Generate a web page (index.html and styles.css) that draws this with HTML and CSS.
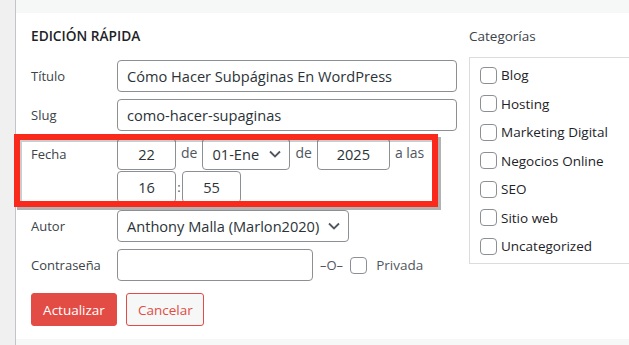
FILE: index.html
```html
<!DOCTYPE html>
<html lang="es">
<head>
<meta charset="utf-8">
<title>Edición rápida</title>
<link rel="stylesheet" href="styles.css">
</head>
<body>
<div class="screen">
  <div class="strip"></div>
  <div class="main">
    <div class="band-top"></div>
    <div class="content">
      <div class="left">
        <h2 class="heading">EDICIÓN RÁPIDA</h2>
        <div class="form">
          <label class="label">Título</label>
          <div class="field"><input class="input wide" type="text" value="Cómo Hacer Subpáginas En WordPress"></div>

          <label class="label">Slug</label>
          <div class="field"><input class="input wide" type="text" value="como-hacer-supaginas"></div>

          <label class="label">Fecha</label>
          <div class="field date">
            <div class="date-line">
              <input class="input num day" type="text" value="22">
              <span class="sep">de</span>
              <div class="select month"><span>01-Ene</span>
                <svg class="chev" width="12" height="8" viewBox="0 0 12 8"><path d="M1 1.5 L6 6.5 L11 1.5" fill="none" stroke="#50575e" stroke-width="1.8"/></svg>
              </div>
              <span class="sep">de</span>
              <input class="input num year" type="text" value="2025">
              <span class="sep">a las</span>
            </div>
            <div class="date-line tight">
              <input class="input num day" type="text" value="16">
              <span class="colon">:</span>
              <input class="input num day" type="text" value="55">
            </div>
          </div>

          <label class="label">Autor</label>
          <div class="field">
            <div class="select author"><span>Anthony Malla (Marlon2020)</span>
              <svg class="chev" width="12" height="8" viewBox="0 0 12 8"><path d="M1 1.5 L6 6.5 L11 1.5" fill="none" stroke="#50575e" stroke-width="1.8"/></svg>
            </div>
          </div>

          <label class="label">Contraseña</label>
          <div class="field pass">
            <input class="input password" type="text" value="">
            <span class="or">–O–</span>
            <span class="check"></span>
            <span class="private">Privada</span>
          </div>
        </div>
        <div class="buttons">
          <button class="btn primary">Actualizar</button>
          <button class="btn secondary">Cancelar</button>
        </div>
      </div>
      <div class="right">
        <div class="cat-title">Categorías</div>
        <ul class="cats">
          <li><span class="check"></span>Blog</li>
          <li><span class="check"></span>Hosting</li>
          <li><span class="check"></span>Marketing Digital</li>
          <li><span class="check"></span>Negocios Online</li>
          <li><span class="check"></span>SEO</li>
          <li><span class="check"></span>Sitio web</li>
          <li><span class="check"></span>Uncategorized</li>
        </ul>
      </div>
    </div>
    <div class="band-bottom"></div>
  </div>
  <div class="highlight"></div>
</div>
</body>
</html>
```

FILE: styles.css
```css
* { box-sizing: border-box; }
html, body { margin: 0; padding: 0; }
body {
  background: #f0f0f1;
  font-family: "Open Sans", "Noto Sans", sans-serif;
  font-size: 13px;
  color: #2c3338;
}
.screen {
  position: relative;
  width: 629px;
  height: 345px;
  overflow: hidden;
  display: flex;
}
.strip {
  width: 15px;
  flex: none;
  background: #f0f0f1;
}
.main {
  flex: 1;
  border-left: 1px solid #c3c4c7;
  display: flex;
  flex-direction: column;
  background: #fff;
}
.band-top { height: 13px; background: #f6f7f7; flex: none; }
.band-bottom { height: 6px; background: #f6f7f7; flex: none; margin-top: auto; }
.content {
  display: flex;
  flex: 1;
  padding-left: 15px;
}
.left { width: 426px; flex: none; }
.right { margin-left: 12px; width: 220px; flex: none; }

.heading {
  margin: 14px 0 15px;
  font-size: 13.7px;
  line-height: 18px;
  font-weight: 600;
  color: #1d2327;
  letter-spacing: 0;
}
.form {
  display: grid;
  grid-template-columns: 86px 1fr;
  row-gap: 7px;
}
.label {
  line-height: 32px;
  color: #3c434a;
}
.field { display: flex; align-items: center; }
.input {
  height: 32px;
  border: 1px solid #8c8f94;
  border-radius: 4px;
  padding: 0 9px;
  font: inherit;
  font-size: 14.6px;
  color: #2c3338;
  background: #fff;
  outline: none;
}
.wide { width: 340px; }
.date { flex-direction: column; align-items: flex-start; gap: 1px; }
.date-line { display: flex; align-items: center; gap: 5px; }
.date-line.tight { gap: 1px; }
.num { text-align: center; padding: 0 4px; }
.day { width: 59px; }
.year { width: 73px; }
.sep { color: #50575e; font-size: 14px; margin-top: -3px; }
.colon { color: #50575e; width: 4px; text-align: center; }
.select {
  height: 32px;
  border: 1px solid #8c8f94;
  border-radius: 4px;
  display: flex;
  align-items: center;
  justify-content: space-between;
  padding: 0 8px 0 9px;
  font-size: 14.6px;
  color: #2c3338;
  background: #fff;
}
.month { width: 88px; }
.author { width: 232px; }
.chev { flex: none; }
.pass { gap: 0; }
.password { width: 196px; }
.or { margin-left: 7px; color: #50575e; font-size: 13px; }
.pass .check { margin-left: 7px; }
.private { margin-left: 9px; color: #50575e; font-size: 13.5px; }
.check {
  display: inline-block;
  width: 17px;
  height: 17px;
  border: 1px solid #8c8f94;
  border-radius: 4px;
  background: #fff;
  flex: none;
}
.buttons {
  display: flex;
  gap: 9px;
  margin-top: 12px;
}
.btn {
  height: 33px;
  border-radius: 3px;
  font: inherit;
  font-size: 13.5px;
  padding: 0 11px;
  cursor: pointer;
}
.primary {
  background: #e24c44;
  border: 1px solid #e24c44;
  color: #fff;
  width: 86px;
}
.secondary {
  background: #f6f7f7;
  border: 1px solid #e24c44;
  color: #e24c44;
  width: 78px;
}
.cat-title {
  margin-top: 14px;
  line-height: 18px;
  font-size: 13.5px;
  color: #3c434a;
}
.cats {
  list-style: none;
  margin: 12px 0 0;
  padding: 3px 10px 2px;
  border: 1px solid #dcdcde;
  border-right: none;
}
.cats li {
  height: 28.5px;
  display: flex;
  align-items: center;
  color: #1d2327;
  font-size: 13.5px;
}
.cats .check { margin-right: 4px; }
.highlight {
  position: absolute;
  left: 14px;
  top: 134px;
  width: 424px;
  height: 73px;
  border: 6px solid #f9291c;
  box-shadow: 3px 3px 0 rgba(0,0,0,0.3), inset 2px 2px 0 rgba(0,0,0,0.2);
  pointer-events: none;
}
```
